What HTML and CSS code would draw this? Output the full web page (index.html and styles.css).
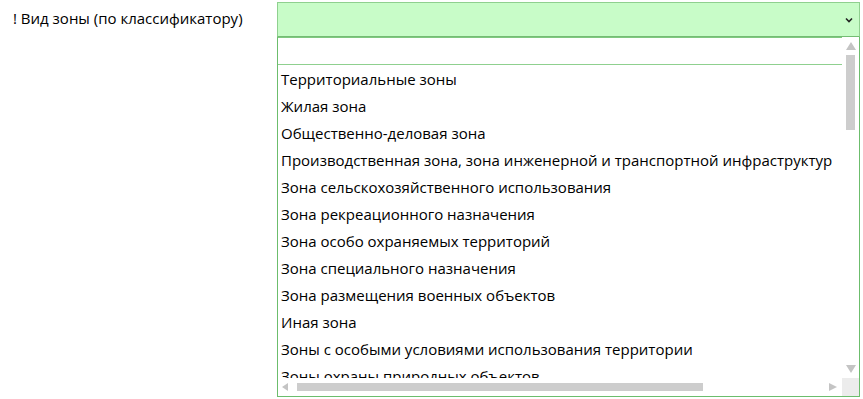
FILE: index.html
```html
<!DOCTYPE html>
<html lang="ru">
<head>
    <meta charset="UTF-8">
    <title>Вид зоны</title>
    <link rel="stylesheet" href="styles.css">
</head>
<body>

<div class="field">
    <label class="field-label">! Вид зоны (по классификатору)</label>
    <div class="combo">
        <div class="combo-head">
            <svg class="chevron" width="8" height="6" viewBox="0 0 8 6"><path d="M1 1.5 L4 4.5 L7 1.5" fill="none" stroke="#222" stroke-width="1.6"/></svg>
        </div>
        <div class="panel">
            <div class="viewport">
                <div class="search"></div>
                <ul class="list">
                    <li>Территориальные зоны</li>
                    <li>Жилая зона</li>
                    <li>Общественно-деловая зона</li>
                    <li>Производственная зона, зона инженерной и транспортной инфраструктур</li>
                    <li>Зона сельскохозяйственного использования</li>
                    <li>Зона рекреационного назначения</li>
                    <li>Зона особо охраняемых территорий</li>
                    <li>Зона специального назначения</li>
                    <li>Зона размещения военных объектов</li>
                    <li>Иная зона</li>
                    <li>Зоны с особыми условиями использования территории</li>
                    <li>Зоны охраны природных объектов</li>
                </ul>
            </div>
            <div class="vscroll">
                <span class="arrow up"></span>
                <span class="thumb"></span>
                <span class="fill"></span>
                <span class="arrow down"></span>
            </div>
            <div class="hscroll">
                <span class="arrow left"></span>
                <span class="thumb"></span>
                <span class="fill"></span>
                <span class="arrow right"></span>
            </div>
            <div class="corner"></div>
        </div>
    </div>
</div>

</body>
</html>
```

FILE: styles.css
```css
body { margin: 0; padding: 2px 3px 0 13px; background: #fff; font-family: 'Open Sans', 'Noto Sans', sans-serif; font-size: 15px; color: #000; }
.field { display: flex; align-items: flex-start; }
.field-label { width: 264px; padding-top: 6px; line-height: 20px; }
.combo { width: 583px; }
.combo-head { height: 33px; background: #c8fcc8; border: 1px solid #8fd08f; border-bottom: 1px solid #74bd74; display: flex; align-items: center; justify-content: flex-end; padding-right: 6px; }
.panel { height: 359px; border: 1px solid #6cbd6c; border-top: none; display: grid; grid-template-columns: 1fr 17px; grid-template-rows: 1fr 18px; background: #fff; }
.viewport { overflow: hidden; }
.search { height: 26px; border-top: 1px solid #80c880; border-bottom: 1px solid #8fd08f; }
.list { list-style: none; margin: 0; padding: 1px 0 0 3px; white-space: nowrap; }
.list li { height: 27px; line-height: 27px; }
.vscroll { display: flex; flex-direction: column; align-items: center; padding: 5px 0 5px; }
.vscroll .arrow { width: 0; height: 0; border-left: 5px solid transparent; border-right: 5px solid transparent; }
.vscroll .up { border-bottom: 8px solid #c4c4c4; margin-bottom: 5px; }
.vscroll .down { border-top: 8px solid #c4c4c4; }
.vscroll .thumb { width: 9px; height: 75px; background: #cdcdcd; }
.vscroll .fill { flex: 1; }
.hscroll { display: flex; align-items: center; padding: 0 5px 0 4px; }
.hscroll .arrow { width: 0; height: 0; border-top: 4px solid transparent; border-bottom: 4px solid transparent; }
.hscroll .left { border-right: 6px solid #c4c4c4; margin-right: 9px; }
.hscroll .right { border-left: 8px solid #c4c4c4; }
.hscroll .thumb { width: 406px; height: 8px; background: #cdcdcd; }
.hscroll .fill { flex: 1; }
.corner { background: #ececec; }
```
